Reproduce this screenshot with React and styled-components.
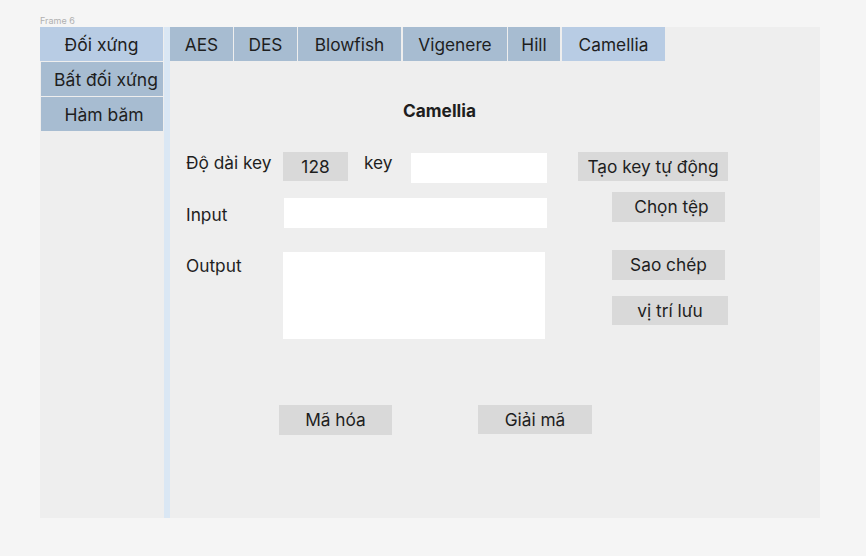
import styled, { createGlobalStyle } from "styled-components";

const GlobalStyle = createGlobalStyle`
    body {
        margin: 0;
        background: #f5f5f5;
        font-family: Inter, "Noto Sans", sans-serif;
        color: #1e1e1e;
    }
`;

const Page = styled.div`
    width: 866px;
    height: 556px;
    padding: 14px 0 0 40px;
    box-sizing: border-box;
`;

const FrameLabel = styled.div`
    font-size: 9px;
    line-height: 13px;
    color: #b0b0b0;
`;

const Frame = styled.div`
    display: flex;
    width: 780px;
    height: 491px;
    background: #eeeeee;
`;

const Sidebar = styled.div`
    display: flex;
    flex-direction: column;
    gap: 1px;
    width: 124px;
`;

const SideItem = styled.div`
    display: flex;
    align-items: center;
    justify-content: center;
    box-sizing: border-box;
    height: 34px;
    width: ${(p) => (p.$active ? "123px" : "122px")};
    margin-left: ${(p) => (p.$active ? "0" : "1px")};
    padding: 1px 0 0 ${(p) => p.$dx || 0}px;
    background: ${(p) => (p.$active ? "#b8cce4" : "#a7bcd1")};
    font-size: 17.5px;
`;

const Strip = styled.div`
    width: 6px;
    background: #dae7f4;
`;

const Main = styled.div`
    display: flex;
    flex-direction: column;
    flex: 1;
`;

const Tabs = styled.div`
    display: flex;
    height: 34px;
`;

const Tab = styled.div`
    display: flex;
    align-items: center;
    justify-content: center;
    box-sizing: border-box;
    padding-top: 1px;
    width: ${(p) => p.$w}px;
    margin-left: ${(p) => p.$gap || 0}px;
    background: ${(p) => (p.$active ? "#b8cce4" : "#a7bcd1")};
    font-size: 17.3px;
`;

const Content = styled.div`
    display: flex;
    flex-direction: column;
    padding-left: 16px;
`;

const Title = styled.div`
    margin: 40px 0 0 217px;
    font-size: 17.3px;
    font-weight: 700;
    line-height: 20px;
`;

const Row = styled.div`
    display: flex;
    align-items: flex-start;
    margin-top: ${(p) => p.$top}px;
    margin-left: ${(p) => p.$left || 0}px;
`;

const Label = styled.div`
    width: ${(p) => p.$w}px;
    margin-top: ${(p) => p.$top || 0}px;
    margin-left: ${(p) => p.$left || 0}px;
    font-size: 17.3px;
    line-height: 20px;
`;

const Field = styled.div`
    width: ${(p) => p.$w}px;
    height: ${(p) => p.$h}px;
    margin-top: ${(p) => p.$top || 0}px;
    margin-left: ${(p) => p.$left || 0}px;
    background: #ffffff;
`;

const Button = styled.div`
    display: flex;
    align-items: center;
    justify-content: center;
    box-sizing: border-box;
    width: ${(p) => p.$w}px;
    height: ${(p) => p.$h || 30}px;
    margin-top: ${(p) => p.$top || 0}px;
    margin-left: ${(p) => p.$left || 0}px;
    padding-left: ${(p) => p.$dx || 0}px;
    background: #d9d9d9;
    font-size: 17.3px;
    line-height: 20px;
`;

const Stack = styled.div`
    display: flex;
    flex-direction: column;
    gap: 16px;
    margin-left: ${(p) => p.$left}px;
`;

const tabs = [
    { name: "AES", w: 63 },
    { name: "DES", w: 63, gap: 1 },
    { name: "Blowfish", w: 103, gap: 1 },
    { name: "Vigenere", w: 104, gap: 2 },
    { name: "Hill", w: 52, gap: 1 },
    { name: "Camellia", w: 103, gap: 2, active: true },
];

const App = () => {
    return (
        <Page>
            <GlobalStyle />
            <FrameLabel>Frame 6</FrameLabel>
            <Frame>
                <Sidebar>
                    <SideItem $active>Đối xứng</SideItem>
                    <SideItem $dx={8}>Bất đối xứng</SideItem>
                    <SideItem $dx={4}>Hàm băm</SideItem>
                </Sidebar>
                <Strip />
                <Main>
                    <Tabs>
                        {tabs.map((t) => (
                            <Tab key={t.name} $w={t.w} $gap={t.gap} $active={t.active}>
                                {t.name}
                            </Tab>
                        ))}
                    </Tabs>
                    <Content>
                        <Title>Camellia</Title>

                        <Row $top={31}>
                            <Label $w={97} $top={1}>Độ dài key</Label>
                            <Button $w={65} $h={29} $dx={-6}>128</Button>
                            <Label $w={47} $top={1} $left={16}>key</Label>
                            <Field $w={136} $h={30} $top={1} />
                            <Button $w={150} $h={29} $left={31}>Tạo key tự động</Button>
                        </Row>

                        <Row $top={9}>
                            <Label $w={98} $top={13}>Input</Label>
                            <Field $w={263} $h={30} $top={6} />
                            <Button $w={113} $left={65} $dx={6}>Chọn tệp</Button>
                        </Row>

                        <Row $top={22}>
                            <Label $w={97} $top={6}>Output</Label>
                            <Field $w={262} $h={87} $top={2} />
                            <Stack $left={67}>
                                <Button $w={113} $dx={-8}>Sao chép</Button>
                                <Button $w={116} $h={29}>vị trí lưu</Button>
                            </Stack>
                        </Row>

                        <Row $top={66} $left={93}>
                            <Button $w={113}>Mã hóa</Button>
                            <Button $w={114} $h={29} $left={86} $dx={-4}>Giải mã</Button>
                        </Row>
                    </Content>
                </Main>
            </Frame>
        </Page>
    );
};

export default App;
